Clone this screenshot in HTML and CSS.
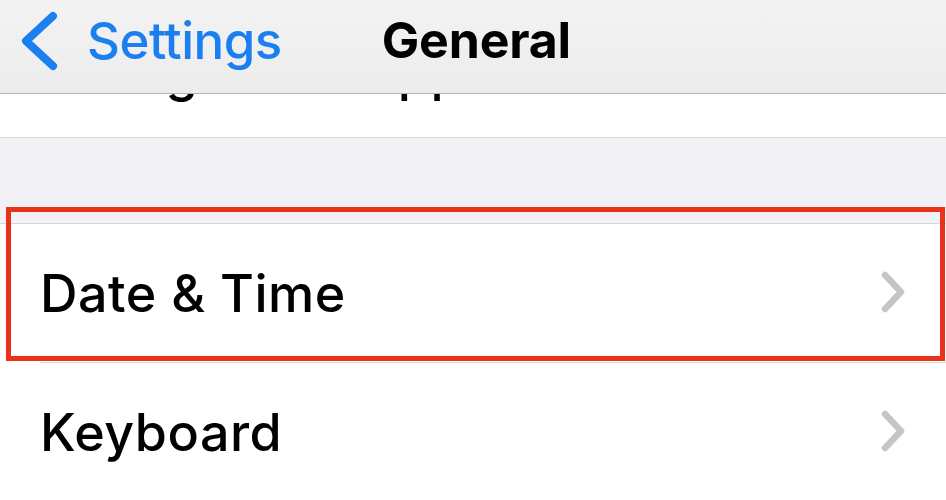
FILE: index.html
```html
<!DOCTYPE html>
<html>
<head>
<meta charset="utf-8">
<link rel="stylesheet" href="styles.css">
</head>
<body>
<div class="screen">
  <header class="nav">
    <div class="back">
      <svg class="back-icon" width="44" height="62" viewBox="0 0 44 62"><path d="M35 6 L8 31 L35 56" fill="none" stroke="#1b7ff0" stroke-width="8" stroke-linecap="round" stroke-linejoin="round"/></svg>
      <span class="back-label">Settings</span>
    </div>
    <h1 class="title">General</h1>
  </header>
  <main class="list">
    <section class="group group-top">
      <div class="row-cut"><span class="label label-cut">Background App Refresh</span></div>
    </section>
    <section class="group">
      <div class="row row-highlight">
        <span class="label">Date &amp; Time</span>
        <svg class="chev" width="28" height="44" viewBox="0 0 28 44"><path d="M6 5 L22 22 L6 39" fill="none" stroke="#c5c5c8" stroke-width="6.5" stroke-linecap="round" stroke-linejoin="round"/></svg>
        <div class="highlight"></div>
      </div>
      <div class="row">
        <span class="label">Keyboard</span>
        <svg class="chev" width="28" height="44" viewBox="0 0 28 44"><path d="M6 5 L22 22 L6 39" fill="none" stroke="#c5c5c8" stroke-width="6.5" stroke-linecap="round" stroke-linejoin="round"/></svg>
      </div>
    </section>
  </main>
</div>
</body>
</html>
```
FILE: styles.css
```css
* { box-sizing: border-box; }
html, body { margin: 0; padding: 0; }
body {
  width: 946px;
  height: 500px;
  overflow: hidden;
  font-family: Inter, "Noto Sans", "Liberation Sans", sans-serif;
  background: #f1f1f6;
}
.screen {
  width: 946px;
  height: 500px;
  overflow: hidden;
  background: #f1f1f6;
}
.nav {
  height: 94px;
  background: linear-gradient(#f3f3f3, #ececec);
  border-bottom: 1px solid #b4b4b4;
  display: flex;
  align-items: center;
}
.back {
  display: flex;
  align-items: center;
  padding-left: 18px;
  margin-top: -13px;
}
.back-icon { display: block; margin-top: 2px; }
.back-label {
  color: #1b7ff0;
  font-size: 51px;
  font-weight: 450;
  margin-left: 25px;
  letter-spacing: -0.5px;
}
.title {
  margin: -13px 0 0 100px;
  font-size: 50px;
  font-weight: 700;
  color: #000;
  letter-spacing: -0.2px;
}
.list {
  display: flex;
  flex-direction: column;
  gap: 85px;
}
.group {
  background: #fff;
  border-top: 1px solid #d6d6da;
  border-bottom: 1px solid #d6d6da;
}
.group-top { border-top: none; }
.row-cut {
  height: 43px;
  overflow: hidden;
  padding-left: 42px;
}
.label-cut {
  display: block;
  margin-top: -51px;
  line-height: 60px;
  white-space: nowrap;
}
.row {
  position: relative;
  height: 138px;
  display: flex;
  align-items: center;
  justify-content: space-between;
  padding: 0 39px 0 40px;
}
.row + .row::before {
  content: "";
  position: absolute;
  top: -1px;
  left: 40px;
  right: 0;
  height: 1px;
  background: #d6d6da;
}
.row + .row { margin-top: 1px; }
.label {
  font-size: 52px;
  font-weight: 500;
  color: #000;
  letter-spacing: 0.5px;
}
.chev { display: block; margin-top: -2px; }
.highlight {
  position: absolute;
  top: -17px;
  left: 6px;
  right: 1px;
  bottom: 1px;
  border: 5px solid #e8321c;
  pointer-events: none;
}
```
